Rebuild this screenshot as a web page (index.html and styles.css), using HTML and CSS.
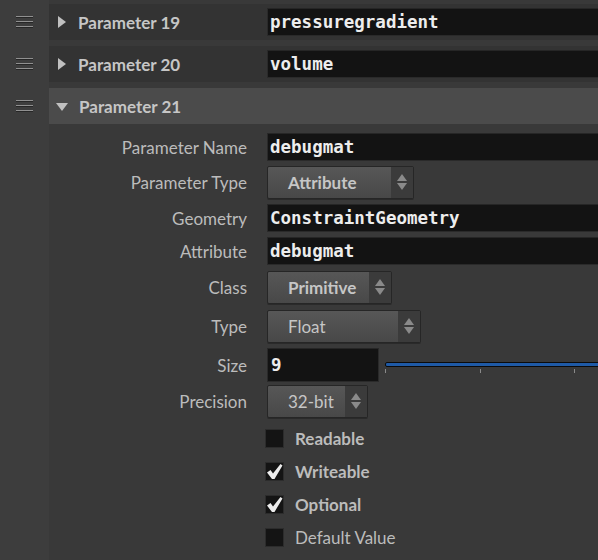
FILE: index.html
```html
<!DOCTYPE html>
<html lang="en">
  <head>
    <meta charset="UTF-8" />
    <title>Parameters</title>
    <link rel="stylesheet" href="styles.css">
  </head>
  <body>
    <div class="panel">
      <!-- Parameter 19 -->
      <div class="param">
        <div class="handle"><span class="grip"></span></div>
        <div class="param-head">
          <div class="head-title"><span class="tri-right"></span>Parameter 19</div>
          <div class="field mono">pressuregradient</div>
        </div>
      </div>

      <!-- Parameter 20 -->
      <div class="param">
        <div class="handle"><span class="grip"></span></div>
        <div class="param-head">
          <div class="head-title"><span class="tri-right"></span>Parameter 20</div>
          <div class="field mono">volume</div>
        </div>
      </div>

      <!-- Parameter 21 (open) -->
      <div class="param param-open">
        <div class="handle"><span class="grip"></span></div>
        <div class="param-main">
          <div class="param-head">
            <div class="head-title"><span class="tri-down"></span>Parameter 21</div>
          </div>

          <div class="param-body">
            <div class="row">
              <label>Parameter Name</label>
              <div class="field mono">debugmat</div>
            </div>
            <div class="row">
              <label>Parameter Type</label>
              <div class="menu w-type"><span class="menu-text bold">Attribute</span><span class="menu-arrows"></span></div>
            </div>
            <div class="row">
              <label>Geometry</label>
              <div class="field mono">ConstraintGeometry</div>
            </div>
            <div class="row">
              <label>Attribute</label>
              <div class="field mono">debugmat</div>
            </div>
            <div class="row row-class">
              <label>Class</label>
              <div class="menu w-class"><span class="menu-text bold">Primitive</span><span class="menu-arrows"></span></div>
            </div>
            <div class="row row-type">
              <label>Type</label>
              <div class="menu w-float"><span class="menu-text">Float</span><span class="menu-arrows"></span></div>
            </div>
            <div class="row row-size">
              <label>Size</label>
              <div class="size-wrap">
                <div class="field mono size-field">9</div>
                <div class="slider"><div class="track"></div><div class="ticks"></div></div>
              </div>
            </div>
            <div class="row row-prec">
              <label>Precision</label>
              <div class="menu w-prec"><span class="menu-text">32-bit</span><span class="menu-arrows"></span></div>
            </div>

            <div class="checks">
              <div class="check-row">
                <span class="box"></span><span class="bold">Readable</span>
              </div>
              <div class="check-row">
                <span class="box checked"></span><span class="bold">Writeable</span>
              </div>
              <div class="check-row">
                <span class="box checked"></span><span class="bold">Optional</span>
              </div>
              <div class="check-row">
                <span class="box"></span><span>Default Value</span>
              </div>
            </div>
          </div>
        </div>
      </div>
    </div>
  </body>
</html>
```

FILE: styles.css
```css
/* base */
:root {
  --left: #3d3d3d;
  --bg: #393939;
  --head: #333333;
  --head-open: #4b4b4b;
  --field: #131313;
  --text: #c6c6c6;
  --label: #bcbcbc;
}
html, body {
  margin: 0;
  padding: 0;
  overflow: hidden;
}
body {
  width: 598px;
  height: 560px;
  background: var(--bg);
  font-family: "Lato", "Open Sans", sans-serif;
  font-size: 17px;
  color: var(--label);
}

.panel {
  width: 612px;
  min-height: 560px;
  padding-top: 4px;
  display: flex;
  flex-direction: column;
  gap: 6px;
  background: linear-gradient(to right, var(--left) 0 49px, var(--bg) 49px);
}

.param {
  display: flex;
}
.param-main {
  flex: 1;
}

/* drag handle */
.handle {
  width: 49px;
  height: 36px;
  display: flex;
  align-items: center;
  justify-content: center;
  flex-shrink: 0;
}
.grip {
  width: 17px;
  height: 12px;
  background: repeating-linear-gradient(to bottom, #909090 0 1px, #262626 1px 2px, transparent 2px 5px);
}

/* header */
.param-head {
  flex: 1;
  height: 36px;
  background: var(--head);
  display: flex;
  align-items: center;
}
.param-open .param-head {
  background: var(--head-open);
}
.head-title {
  width: 218px;
  flex-shrink: 0;
  display: flex;
  align-items: center;
  font-weight: 700;
  color: var(--text);
  box-sizing: border-box;
  padding-left: 9px;
}
.tri-right {
  width: 0;
  height: 0;
  border-top: 6px solid transparent;
  border-bottom: 6px solid transparent;
  border-left: 8px solid #c0c0c0;
  margin-right: 12px;
}
.tri-down {
  width: 0;
  height: 0;
  border-left: 6.5px solid transparent;
  border-right: 6.5px solid transparent;
  border-top: 8px solid #c0c0c0;
  margin: 2px 11px 0 -2px;
}

/* text fields */
.field {
  flex: 1;
  height: 28px;
  box-sizing: border-box;
  background: var(--field);
  border: 1px solid #2a2a2a;
  border-top-color: #262626;
  display: flex;
  align-items: center;
  padding-left: 2px;
  color: #ededed;
}
.mono {
  font-family: "DejaVu Sans Mono", monospace;
  font-weight: 700;
  font-size: 17.5px;
}

/* body rows */
.param-body {
  padding: 9px 0 0;
  display: flex;
  flex-direction: column;
  gap: 5px;
}
.row {
  display: grid;
  grid-template-columns: 198px 1fr;
  column-gap: 20px;
  align-items: center;
}
.row label {
  text-align: right;
  color: var(--label);
}
.row-class { margin-top: 1px; }
.row-type { margin-top: 1px; }
.row-size { margin-top: 0; }
.row-prec { margin-top: -2px; }
.bold {
  font-weight: 700;
}

/* dropdown menus */
.menu {
  height: 33px;
  box-sizing: border-box;
  display: flex;
  border: 1px solid #262626;
  border-radius: 2px;
  background: linear-gradient(to bottom, #575757, #484848);
  box-shadow: 0 1px 0 #2a2a2a;
  color: var(--text);
}
.menu-text {
  flex: 1;
  display: flex;
  align-items: center;
  padding-left: 20px;
}
.menu-arrows {
  width: 22px;
  background: #3b3b3b;
  position: relative;
}
.menu-arrows::before,
.menu-arrows::after {
  content: "";
  position: absolute;
  left: 6px;
  border-left: 5px solid transparent;
  border-right: 5px solid transparent;
}
.menu-arrows::before {
  top: 7px;
  border-bottom: 7px solid #8a8a8a;
}
.menu-arrows::after {
  top: 16px;
  border-top: 7px solid #8a8a8a;
}
.w-type { width: 147px; }
.w-class { width: 125px; }
.w-float { width: 154px; }
.w-prec { width: 101px; }

/* size + slider */
.size-wrap {
  display: flex;
  align-items: center;
  gap: 6px;
}
.size-field {
  flex: 0 0 112px;
  height: 34px;
  padding-left: 3px;
}
.slider {
  flex: 1;
  height: 34px;
  display: flex;
  flex-direction: column;
  gap: 2px;
  padding-top: 14px;
  box-sizing: border-box;
}
.track {
  height: 5px;
  box-sizing: border-box;
  background: #1f5aa6;
  border: 1px solid #0b0b0b;
  border-radius: 2px;
}
.ticks {
  height: 4px;
  background: repeating-linear-gradient(to right, #8a8a8a 0 1px, transparent 1px 94.5px);
}

/* checkboxes */
.checks {
  padding-left: 216px;
  display: flex;
  flex-direction: column;
  margin-top: -1px;
}
.check-row {
  height: 33px;
  display: flex;
  align-items: center;
  gap: 11px;
  color: var(--label);
}
.box {
  width: 19px;
  height: 19px;
  box-sizing: border-box;
  background: #141414;
  border: 1px solid #2c2c2c;
  position: relative;
}
.box.checked::after {
  content: "";
  position: absolute;
  left: 0;
  top: 0;
  width: 17px;
  height: 17px;
  background: no-repeat center/contain url("data:image/svg+xml,%3Csvg xmlns='http://www.w3.org/2000/svg' viewBox='0 0 17 17'%3E%3Cpath d='M1 9.5 L4.5 7 L7 10.5 L14.5 1 L16.5 2.5 L8.5 16 L6 16 Z' fill='%23ececec'/%3E%3C/svg%3E");
}
```
